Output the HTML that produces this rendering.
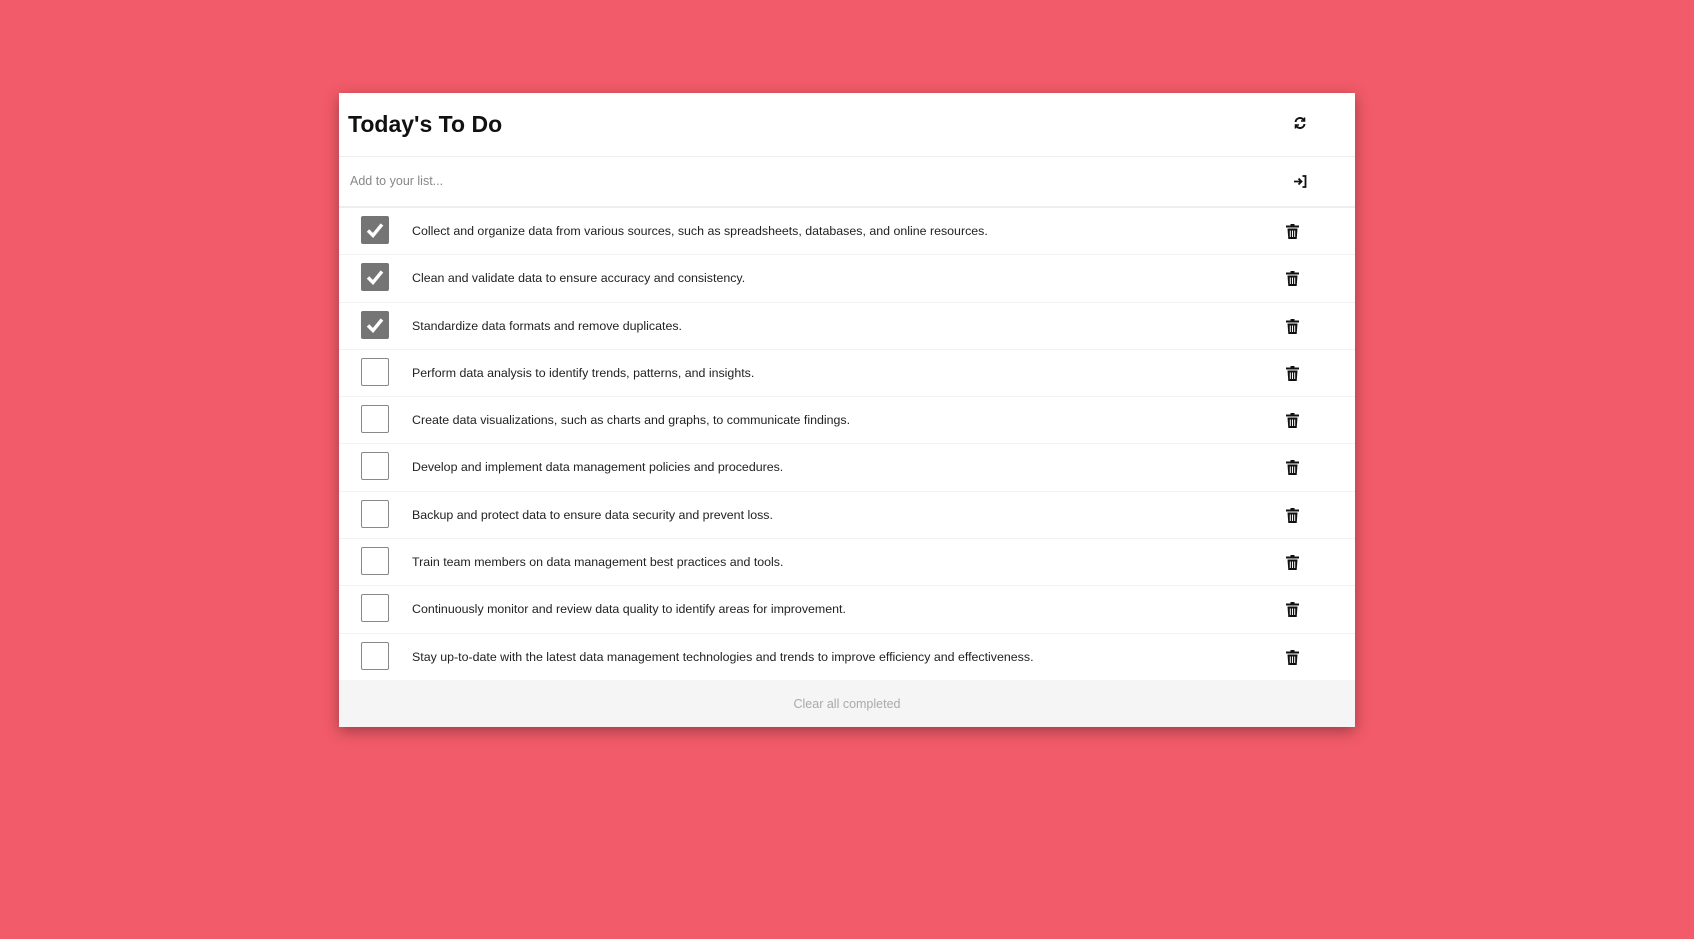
<!DOCTYPE html>
<html><head><meta charset="utf-8"><style>
body{margin:0;width:1694px;height:939px;background:#f25b69;font-family:"Liberation Sans",sans-serif;overflow:hidden}
.card{position:absolute;left:339px;top:93px;width:1016px;height:634px;background:#fff;box-shadow:0 4px 14px rgba(0,0,0,.35)}
.hd{height:63px;border-bottom:1px solid #eee;position:relative}
.hd h1{margin:0;position:absolute;left:9px;top:18px;font-size:23px;font-weight:bold;color:#111}
.in{height:49px;border-bottom:2px solid #eee;position:relative}
.in span{position:absolute;left:11px;top:17px;font-size:12.5px;color:#888}
.row{height:46.3px;border-bottom:1px solid #f2f2f2;position:relative}
.cb{position:absolute;left:22px;top:8px;width:28px;height:28px;border:1px solid #888;border-radius:2px;box-sizing:border-box;background:#fff}
.cb.on{background:#757575;border-color:#757575}
.cb svg{position:absolute;left:1px;top:1px}
.row .t{position:absolute;left:73px;top:16px;font-size:12.4px;color:#222}
.tr{position:absolute;left:947px;top:16px}
.ft{position:absolute;left:0;right:0;bottom:0;height:47px;background:#f5f5f5;text-align:center;line-height:49px;font-size:12.5px;color:#aaa}
.ic{position:absolute}
</style></head><body>
<div class="card">
<div class="hd"><h1>Today's To Do</h1>
<svg class="ic" style="left:954px;top:23px" width="14" height="14" viewBox="0 0 14 14" fill="none" stroke="#111" stroke-width="2"><path d="M2.5 6A4.5 4.5 0 0 1 11 4.5"/><path d="M11.5 8A4.5 4.5 0 0 1 3 9.5"/><path d="M11.5 1.5v3.5h-3.5" stroke-width="1.6"/><path d="M2.5 12.5v-3.5h3.5" stroke-width="1.6"/></svg>
</div>
<div class="in"><span>Add to your list...</span>
<svg class="ic" style="left:954px;top:18px" width="14" height="13" viewBox="0 0 14 13" fill="none" stroke="#111" stroke-width="1.8"><path d="M1 6.5h7M5.5 3.5l3 3-3 3"/><path d="M9.5 1h3v11h-3"/></svg>
</div>
<div id="list"></div>
<div class="ft">Clear all completed</div>
</div>
<script>
var items=["Collect and organize data from various sources, such as spreadsheets, databases, and online resources.","Clean and validate data to ensure accuracy and consistency.","Standardize data formats and remove duplicates.","Perform data analysis to identify trends, patterns, and insights.","Create data visualizations, such as charts and graphs, to communicate findings.","Develop and implement data management policies and procedures.","Backup and protect data to ensure data security and prevent loss.","Train team members on data management best practices and tools.","Continuously monitor and review data quality to identify areas for improvement.","Stay up-to-date with the latest data management technologies and trends to improve efficiency and effectiveness."];
var h="";items.forEach(function(t,i){h+='<div class="row"><div class="cb'+(i<3?' on':'')+'">'+(i<3?'<svg width="24" height="24" viewBox="0 0 24 24"><path d="M5 12.5l5 5 9-11" fill="none" stroke="#fff" stroke-width="3.4"/></svg>':'')+'</div><div class="t">'+t+'</div><svg class="tr" width="13" height="15" viewBox="0 0 13 15"><rect x="0" y="1.5" width="13" height="2" fill="#111"/><rect x="4.5" y="0" width="4" height="2" fill="#111"/><path d="M1.5 4.5h10l-0.8 10.5h-8.4z" fill="#111"/><path d="M4.3 6.5v6.5M6.5 6.5v6.5M8.7 6.5v6.5" stroke="#fff" stroke-width="1"/></svg></div>'});
document.getElementById("list").innerHTML=h;
</script>
</body></html>
